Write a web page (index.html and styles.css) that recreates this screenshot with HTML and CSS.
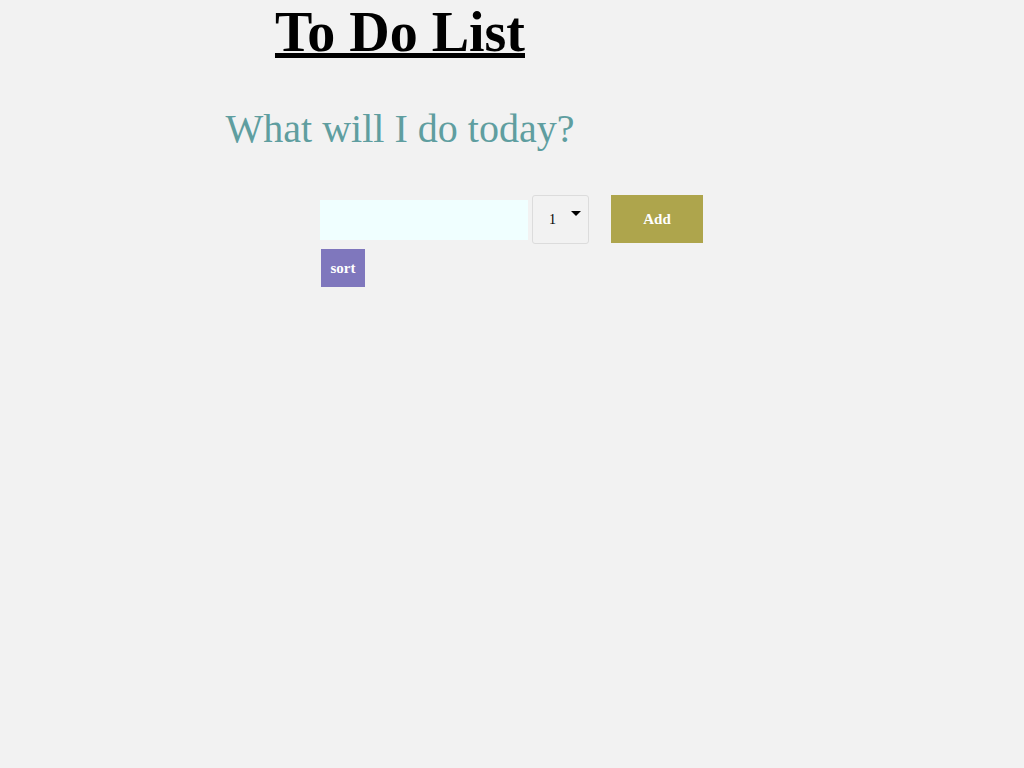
FILE: index.html
```html
<!DOCTYPE html>
<html>
<head>
<meta charset="utf-8">
<title>To Do List</title>
<link rel="stylesheet" href="styles.css">
</head>
<body>
<div class="page">
  <header class="header">
    <h1 class="title">To Do List</h1>
    <h2 class="subtitle">What will I do today?</h2>
  </header>
  <div class="form">
    <div class="form-row">
      <input class="task-input" type="text">
      <div class="priority">
        <span class="priority-value">1</span>
        <span class="caret"></span>
      </div>
      <button class="btn btn-add">Add</button>
    </div>
    <button class="btn btn-sort">sort</button>
  </div>
</div>
</body>
</html>
```

FILE: styles.css
```css
html, body {
  margin: 0;
  padding: 0;
  background: #f2f2f2;
}
body {
  font-family: "Liberation Serif", "Times New Roman", serif;
}
.page {
  width: 800px;
}
.header {
  text-align: center;
}
.title {
  margin: 0;
  font-size: 56px;
  line-height: 64px;
  font-weight: bold;
  color: #000;
  text-decoration: underline;
  text-decoration-thickness: 5px;
  text-underline-offset: 2px;
}
.subtitle {
  margin: 42px 0 0;
  font-size: 40px;
  line-height: 46px;
  font-weight: normal;
  color: #5f9ea0;
}
.form {
  margin: 43px 0 0 320px;
  display: flex;
  flex-direction: column;
  align-items: flex-start;
  gap: 5px;
}
.form-row {
  display: flex;
  align-items: flex-start;
}
.task-input {
  width: 208px;
  height: 40px;
  box-sizing: border-box;
  border: none;
  margin: 5px 0 0;
  padding: 0 8px;
  background: #f0ffff;
  outline: none;
}
.priority {
  position: relative;
  box-sizing: border-box;
  width: 57px;
  height: 49px;
  margin-left: 4px;
  border: 1px solid #dcdcdc;
  border-radius: 3px;
  background: #f2f2f2;
  font-size: 14px;
  color: #000;
}
.priority-value {
  position: absolute;
  left: 16px;
  top: 16px;
  color: #000;
}
.caret {
  position: absolute;
  left: 38px;
  top: 15px;
  width: 0;
  height: 0;
  border-left: 5px solid transparent;
  border-right: 5px solid transparent;
  border-top: 5px solid #000;
}
.btn {
  border: none;
  margin: 0;
  color: #fff;
  font-family: "Liberation Serif", "Times New Roman", serif;
  font-weight: bold;
  padding: 0;
  cursor: pointer;
}
.btn-add {
  width: 92px;
  height: 48px;
  margin-left: 22px;
  background: #aea54c;
  font-size: 15px;
}
.btn-sort {
  width: 44px;
  height: 38px;
  margin-left: 1px;
  background: #7f77bd;
  font-size: 15px;
}
```
